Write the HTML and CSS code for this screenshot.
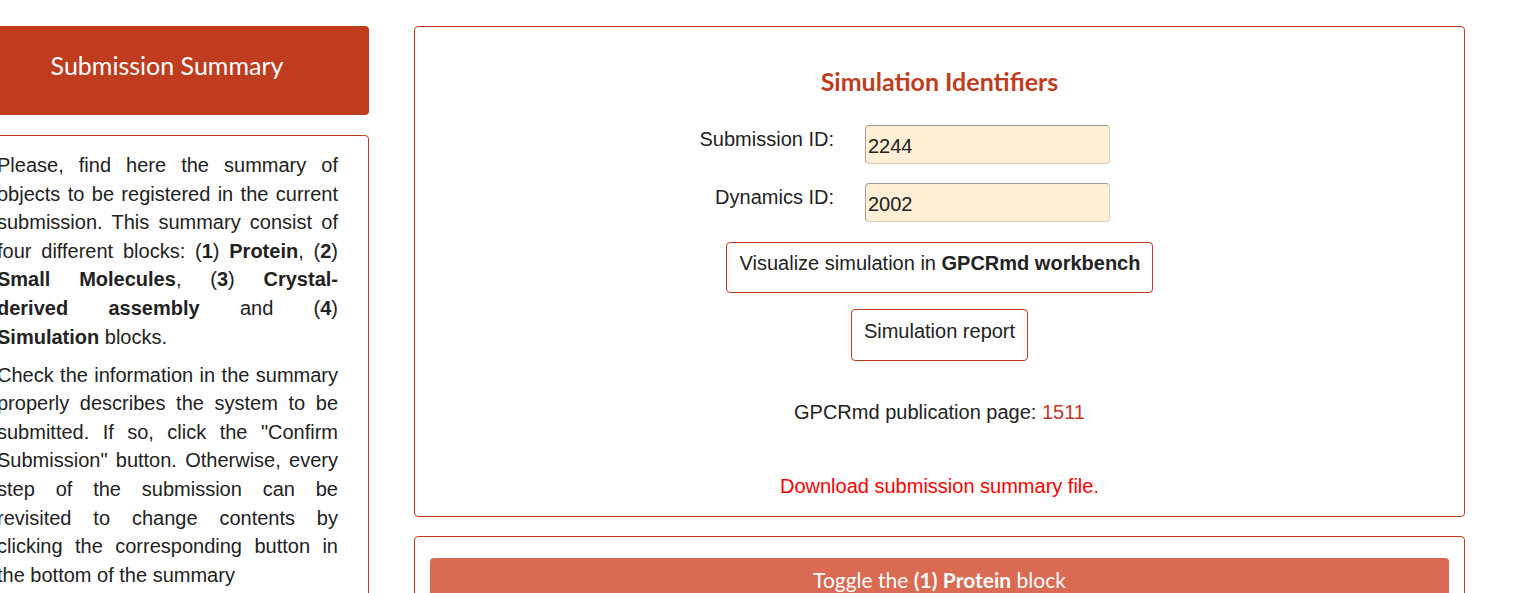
FILE: index.html
```html
<!DOCTYPE html>
<html lang="en">
<head>
<meta charset="utf-8">
<title>Submission Summary</title>
<link rel="stylesheet" href="styles.css">
</head>
<body>
<div class="page">
  <aside class="side">
    <div class="side-head">Submission Summary</div>
    <div class="side-panel">
      <p>Please, find here the summary of objects to be registered in the current submission. This summary consist of four different blocks: (<b>1</b>) <b>Protein</b>, (<b>2</b>) <b>Small Molecules</b>, (<b>3</b>) <b>Crystal-derived assembly</b> and (<b>4</b>) <b>Simulation</b> blocks.</p>
      <p>Check the information in the summary properly describes the system to be submitted. If so, click the "Confirm Submission" button. Otherwise, every step of the submission can be revisited to change contents by clicking the corresponding button in the bottom of the summary</p>
    </div>
  </aside>
  <main class="main">
    <section class="panel ids">
      <h2 class="ids-title">Simulation Identifiers</h2>
      <div class="field">
        <label class="field-label">Submission ID:</label>
        <input class="field-input" type="text" value="2244" readonly>
      </div>
      <div class="field field-second">
        <label class="field-label">Dynamics ID:</label>
        <input class="field-input" type="text" value="2002" readonly>
      </div>
      <div class="actions">
        <a class="outline-btn btn-wide">Visualize simulation in <b>GPCRmd workbench</b></a>
        <a class="outline-btn btn-report">Simulation report</a>
      </div>
      <p class="pub">GPCRmd publication page: <a class="pub-link">1511</a></p>
      <p class="download"><a>Download submission summary file.</a></p>
    </section>
    <section class="panel block">
      <div class="toggle">Toggle the <b>(1)</b> <b>Protein</b> block</div>
    </section>
  </main>
</div>
</body>
</html>
```

FILE: styles.css
```css
html, body {
  margin: 0;
  padding: 0;
  background: #ffffff;
  overflow: hidden;
}

body {
  font-family: "Liberation Sans", Arial, sans-serif;
  font-size: 20px;
  color: #222222;
}

.page {
  display: flex;
  align-items: flex-start;
  gap: 45px;
  padding-top: 26px;
  margin-left: -35px;
}

.side {
  width: 404px;
  flex: none;
}

.side-head {
  height: 89px;
  box-sizing: border-box;
  padding-top: 24px;
  background: #bf3c1f;
  border-radius: 4px;
  color: #ffffff;
  font-family: Lato, "Open Sans", sans-serif;
  font-size: 25px;
  line-height: 31px;
  text-align: center;
}

.side-panel {
  margin-top: 20px;
  border: 1px solid #bf3c1f;
  border-radius: 4px;
  padding: 15px 30px 10px 31px;
}

.side-panel p {
  margin: 0 0 9.5px;
  line-height: 28.6px;
  text-align: justify;
}

.main {
  width: 1051px;
  flex: none;
}

.panel {
  border: 1px solid #bf3c1f;
  border-radius: 4px;
  box-sizing: border-box;
}

.ids {
  padding: 39px 0 18px;
  text-align: center;
}

.ids-title {
  margin: 0 0 28px;
  font-family: Lato, "Open Sans", sans-serif;
  font-weight: 700;
  font-size: 25px;
  line-height: 31px;
  color: #c03c1f;
}

.field {
  display: flex;
  align-items: flex-start;
  gap: 31px;
}

.field-second {
  margin-top: 19px;
}

.field-label {
  width: 419px;
  flex: none;
  text-align: right;
  padding-top: 3px;
  line-height: 23px;
}

.field-input {
  width: 245px;
  height: 39px;
  box-sizing: border-box;
  margin: 0;
  padding: 4px 2px 0;
  background: #ffefd5;
  border: 1px solid #d6cfc4;
  border-top-color: #a09a92;
  border-left-color: #a7a099;
  border-radius: 4px;
  font-family: "Liberation Sans", Arial, sans-serif;
  font-size: 20px;
  color: #222222;
  outline: none;
}

.actions {
  display: flex;
  flex-direction: column;
  align-items: center;
  gap: 16px;
  margin-top: 20px;
}

.outline-btn {
  display: block;
  border: 1px solid #bf3c1f;
  border-radius: 4px;
  line-height: 23px;
  color: #222222;
  text-decoration: none;
}

.btn-wide {
  padding: 9px 12px 17px 13px;
}

.btn-report {
  padding: 10px 12px 17px 12px;
}

.pub {
  margin: 40px 0 0;
  line-height: 23px;
}

.pub-link {
  color: #c0392b;
}

.download {
  margin: 51px 0 0;
  line-height: 23px;
}

.download a {
  color: #ff0000;
}

.block {
  margin-top: 19px;
  padding: 21px 15px 20px;
  height: 80px;
}

.toggle {
  background: #da6a52;
  border-radius: 4px;
  padding: 9px 0;
  color: #ffffff;
  font-family: Lato, "Open Sans", sans-serif;
  font-size: 21px;
  line-height: 26px;
  text-align: center;
}
```
